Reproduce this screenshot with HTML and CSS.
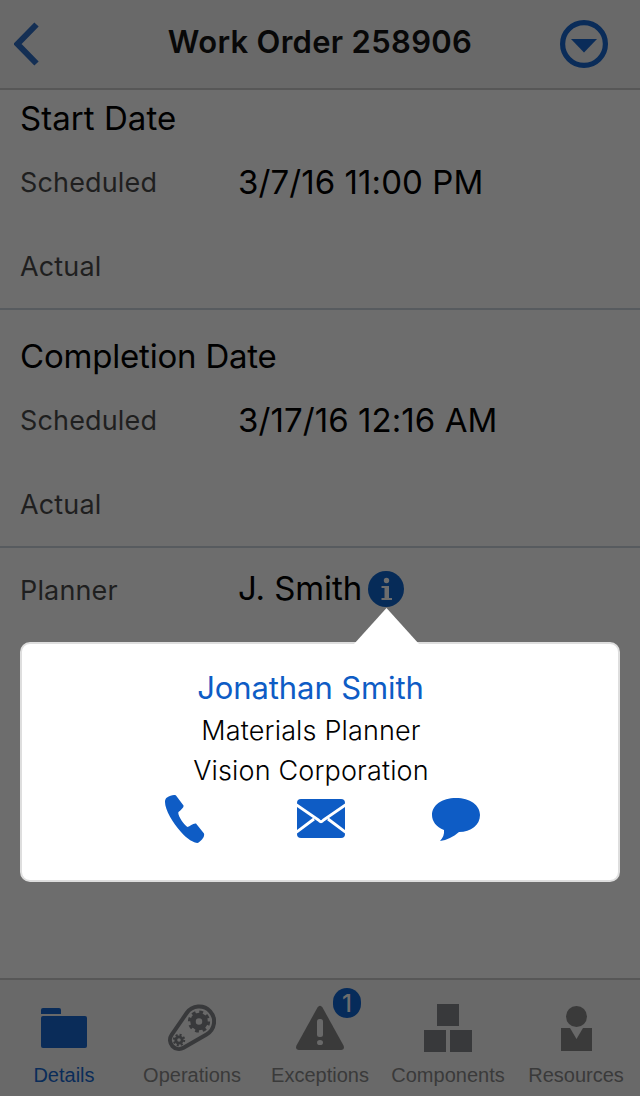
FILE: index.html
```html
<!DOCTYPE html>
<html lang="en">
  <head>
    <meta charset="utf-8" />
    <title>Work Order 258906</title>
    <link rel="stylesheet" href="styles.css">
  </head>
  <body>
    <header class="navbar">
      <svg class="back" width="26" height="44" viewBox="0 0 26 44">
        <path d="M22.500 2.500L3.500 22L22.500 41.500" fill="none" stroke="currentColor" stroke-width="6" />
      </svg>
      <h1>Work Order 258906</h1>
      <svg class="more" width="48" height="48" viewBox="0 0 48 48">
        <circle cx="24" cy="24" r="21.400" fill="none" stroke="currentColor" stroke-width="5.200" />
        <path d="M11 19H37L24 32.500Z" fill="currentColor" />
      </svg>
    </header>

    <main>
      <section class="group group-first">
        <h2 class="start">Start Date</h2>
        <div class="row">
          <span class="label">Scheduled</span>
          <span class="value">3/7/16 11:00 PM</span>
        </div>
        <div class="row"><span class="label">Actual</span></div>
      </section>

      <section class="group">
        <h2>Completion Date</h2>
        <div class="row">
          <span class="label">Scheduled</span>
          <span class="value">3/17/16 12:16 AM</span>
        </div>
        <div class="row"><span class="label">Actual</span></div>
      </section>

      <section class="row planner">
        <span class="label">Planner</span>
        <span class="value name">J. Smith</span>
        <svg class="info" width="36" height="36" viewBox="0 0 36 36">
          <circle cx="18" cy="18" r="18" fill="#062b58" />
          <circle cx="18.500" cy="9.500" r="2.700" fill="#6d6d6d" />
          <path d="M13.500 15H21V27H24V29H13.500V27H16.500V17H13.500Z" fill="#6d6d6d" />
        </svg>

        <div class="callout">
          <svg class="arrow" width="66" height="36" viewBox="0 0 66 36">
            <path d="M0 36L32.500 0L65 36Z" fill="#fff" />
          </svg>
          <div class="contact-name">Jonathan Smith</div>
          <div class="contact-line">Materials Planner</div>
          <div class="contact-line company">Vision Corporation</div>
          <div class="actions">
            <svg width="40" height="48" viewBox="0 0 40 48">
              <path d="M2 2.500C5 .5 9 -.5 11 .5L18.500 10.500C19 12 17 14 13.500 17C12 20 19 30 22.500 32C25 31.500 28 28 31 28.500L39 38.500C40 42 36 46 32.500 48C29 48 22 44 16 37C8 28 0 15 0 7C0 5 .5 3.500 2 2.500Z" fill="currentColor" />
            </svg>
            <svg class="mail" width="48" height="40" viewBox="0 0 48 40">
              <rect width="48" height="39" rx="4" fill="currentColor" />
              <path d="M-1 5.500L21.500 21Q24 24.500 26.500 21L49 5.500M-1 33.500L17 20M49 33.500L31 20" fill="none" stroke="#fff" stroke-width="2.900" />
            </svg>
            <svg width="48" height="44" viewBox="0 -1 48 44">
              <path d="M24 0C38 0 48 7 48 17C48 27 39 34 27 34C21 39 15 42 8 43C11 40 12.500 36 12 32C4 29 0 23 0 17C0 7 10 0 24 0Z" fill="currentColor" />
            </svg>
          </div>
        </div>
      </section>
    </main>

    <nav class="tabbar">
      <div class="tab active">
        <svg width="48" height="48" viewBox="0 0 48 48">
          <path d="M1 10V6Q1 4 3 4H19Q21 4 21 6V10Z" fill="currentColor" />
          <rect x="1" y="12" width="46" height="32" rx="2" fill="currentColor" />
        </svg>
        <span>Details</span>
      </div>
      <div class="tab">
        <svg class="metal" width="48" height="48" viewBox="0 0 48 48">
          <path d="M18.700 9A15 15 0 1 1 38.500 30.500L15.500 43.800A9 9 0 0 1 3.600 30.900Z" fill="none" stroke="currentColor" stroke-width="4" />
          <circle cx="31" cy="17.500" r="6" fill="none" stroke="currentColor" stroke-width="5.500" />
          <circle cx="31" cy="17.500" r="9.600" fill="none" stroke="currentColor" stroke-width="3" stroke-dasharray="3.770 3.770" />
          <circle cx="11" cy="36" r="3.200" fill="none" stroke="currentColor" stroke-width="2.800" />
          <circle cx="11" cy="36" r="5.200" fill="none" stroke="currentColor" stroke-width="2" stroke-dasharray="2.040 2.040" />
        </svg>
        <span>Operations</span>
      </div>
      <div class="tab">
        <svg width="48" height="48" viewBox="0 0 48 48">
          <path d="M21.500 3.500Q24 0 26.500 3.500L47.500 41.500Q49 45.500 45 46H3Q-1 45.500 .5 41.500Z" fill="currentColor" />
          <rect x="21" y="15" width="6" height="18" rx="2.500" fill="#696969" />
          <ellipse cx="24" cy="38.500" rx="3" ry="2.600" fill="#696969" />
        </svg>
        <b class="badge">1</b>
        <span>Exceptions</span>
      </div>
      <div class="tab">
        <svg class="metal" width="48" height="48" viewBox="0 0 48 48">
          <path d="M13 0H35V22H13ZM0 26H22V48H0ZM26 26H48V48H26Z" fill="currentColor" />
        </svg>
        <span>Components</span>
      </div>
      <div class="tab">
        <svg width="48" height="48" viewBox="0 0 48 48">
          <circle cx="24.500" cy="12.500" r="10.500" fill="currentColor" />
          <path d="M9 24H18L24.500 35L31 24H40V47H9Z" fill="currentColor" />
        </svg>
        <span>Resources</span>
      </div>
    </nav>
  </body>
</html>
```

FILE: styles.css
```css
* {
  box-sizing: border-box;
}

body {
  margin: 0;
  height: 1096px;
  display: flex;
  flex-direction: column;
  overflow: hidden;
  background-color: #6d6d6d;
  color: #000;
  font-family: Inter, "Liberation Sans", sans-serif;
}

svg {
  display: block;
  flex: none;
}

h1,
h2 {
  margin: 0;
}

.navbar {
  height: 90px;
  flex: none;
  display: flex;
  align-items: center;
  justify-content: space-between;
  padding: 0 32px 0 14px;
  background-color: #696969;
  border-bottom: 2px solid #575757;
  color: #0a2c59;
}

.back {
  color: #142f54;
}

.navbar h1 {
  padding: 0 0 6px 40px;
  color: #080808;
  font-size: 31px;
  font-weight: 600;
  letter-spacing: 0.3px;
  white-space: nowrap;
}

main {
  flex: 1;
}

.group {
  padding: 26px 20px 0;
  border-bottom: 2px solid #575b5f;
}

.group-first {
  padding-top: 8px;
}

.group h2 {
  height: 42px;
  font-size: 33px;
  font-weight: 400;
  letter-spacing: -0.2px;
  line-height: 40px;
}

.group .start {
  letter-spacing: 0.05px;
}

.row {
  height: 84px;
  display: flex;
  align-items: center;
}

.label {
  width: 218px;
  color: #1f1f1f;
  font-size: 27px;
  letter-spacing: 0.15px;
}

.value {
  font-size: 33px;
  letter-spacing: 0.08px;
  white-space: nowrap;
}

.planner {
  position: relative;
  padding: 0 20px;
}

.name {
  padding-bottom: 4px;
  letter-spacing: -0.1px;
}

.planner .info {
  margin: 0 0 2px 6px;
}

.callout {
  position: absolute;
  top: 94px;
  left: 20px;
  width: 600px;
  height: 240px;
  padding-top: 24px;
  background-color: #fff;
  border: 2px solid #dedede;
  border-radius: 10px;
  text-align: center;
}

.arrow {
  position: absolute;
  top: -36px;
  left: 332px;
}

.contact-name,
.contact-line {
  padding-right: 18px;
}

.contact-name {
  padding-right: 19px;
  color: #0e5cc5;
  font-size: 31px;
  letter-spacing: -0.1px;
  line-height: 40px;
}

.contact-line {
  font-size: 27px;
  font-weight: 300;
  letter-spacing: 0.15px;
  line-height: 40px;
  padding-top: 3px;
}

.company {
  padding-top: 0;
}

.actions {
  display: flex;
  align-items: center;
  justify-content: space-between;
  width: 315px;
  height: 56px;
  margin-left: 143px;
  color: #0e5cc5;
}

.mail {
  margin-left: 5px;
}

.tabbar {
  height: 118px;
  flex: none;
  display: grid;
  grid-template-columns: repeat(5, 1fr);
  background-color: #696969;
  border-top: 2px solid #575757;
}

.tab {
  position: relative;
  display: flex;
  flex-direction: column;
  align-items: center;
  padding-top: 24px;
  color: #3a3a3a;
  font-family: "Liberation Sans", Arial, sans-serif;
  font-size: 20px;
}

.tab span {
  margin-top: 11px;
  line-height: 24px;
}

.tab .metal {
  color: #38393b;
}

.active {
  color: #0a2c59;
}

.badge {
  position: absolute;
  top: 8px;
  left: 77px;
  width: 28px;
  height: 30px;
  border-radius: 14px;
  background-color: #062b5a;
  color: #6d6d6d;
  font-family: Inter, sans-serif;
  font-size: 24px;
  font-weight: 500;
  line-height: 31px;
  text-align: center;
}
```
